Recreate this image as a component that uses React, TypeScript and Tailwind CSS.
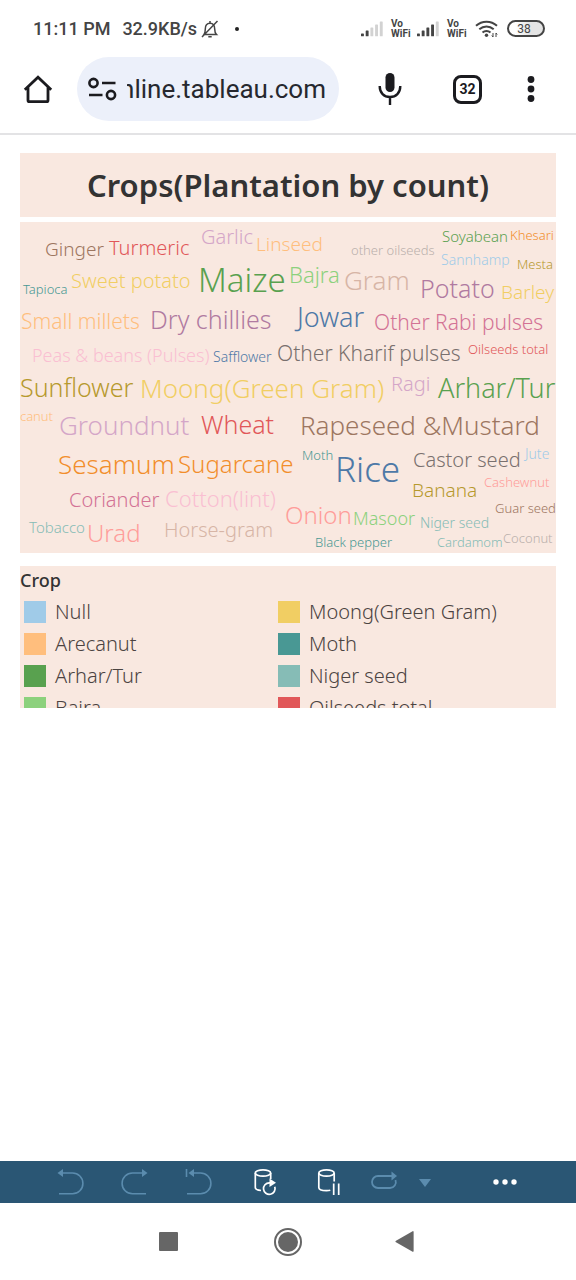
import React from "react";

type Word = [text: string, x: number, y: number, size: number, color: string];

// Word positions are the left end of the baseline on the 536 x 331 cloud canvas.
const words: Word[] = [
  ["Ginger", 25, 34, 19, "#9d7660"],
  ["Turmeric", 89, 33, 20, "#e15759"],
  ["Garlic", 181, 22, 20, "#d4a6c8"],
  ["Linseed", 236, 29, 19, "#ffbe7d"],
  ["other oilseeds", 331, 33, 13, "#bab0ac"],
  ["Soyabean", 422, 20, 15, "#59a14f"],
  ["Khesari", 490, 18, 13, "#f28e2b"],
  ["Sannhamp", 421, 43, 14, "#a0cbe8"],
  ["Mesta", 497, 47, 13, "#b6992d"],
  ["Tapioca", 3, 72, 13, "#499894"],
  ["Sweet potato", 51, 66, 20, "#f1ce63"],
  ["Maize", 178, 70, 33, "#59a14f"],
  ["Bajra", 269, 61, 22, "#8cd17d"],
  ["Gram", 324, 68, 26, "#d7b5a6"],
  ["Potato", 400, 76, 25, "#b07aa1"],
  ["Barley", 481, 77, 19, "#f1ce63"],
  ["Small millets", 1, 107, 21, "#ffbe7d"],
  ["Dry chillies", 130, 107, 25, "#b07aa1"],
  ["Jowar", 277, 105, 27, "#4e79a7"],
  ["Other Rabi pulses", 354, 108, 21, "#d37295"],
  ["Peas & beans (Pulses)", 12, 140, 18, "#fabfd2"],
  ["Safflower", 193, 140, 14, "#4e79a7"],
  ["Other Kharif pulses", 257, 139, 21, "#79706e"],
  ["Oilseeds total", 448, 132, 13, "#e15759"],
  ["Sunflower", 0, 175, 25, "#b6992d"],
  ["Moong(Green Gram)", 120, 176, 26, "#f1ce63"],
  ["Ragi", 371, 169, 20, "#d4a6c8"],
  ["Arhar/Tur", 418, 176, 27, "#59a14f"],
  ["Arecanut", -20, 199, 13, "#ffbe7d"],
  ["Groundnut", 39, 213, 26, "#d4a6c8"],
  ["Wheat", 181, 212, 25, "#e15759"],
  ["Rapeseed &Mustard", 280, 213, 26, "#9d7660"],
  ["Sesamum", 38, 252, 26, "#f28e2b"],
  ["Sugarcane", 158, 251, 24, "#f28e2b"],
  ["Moth", 282, 238, 13, "#499894"],
  ["Rice", 315, 260, 35, "#4e79a7"],
  ["Castor seed", 393, 245, 20, "#79706e"],
  ["Jute", 505, 237, 14, "#a0cbe8"],
  ["Banana", 392, 275, 19, "#b6992d"],
  ["Cashewnut", 464, 265, 13, "#ff9d9a"],
  ["Coriander", 49, 285, 20, "#d37295"],
  ["Cotton(lint)", 145, 285, 22, "#fabfd2"],
  ["Onion", 265, 302, 24, "#ff9d9a"],
  ["Masoor", 333, 303, 18, "#8cd17d"],
  ["Guar seed", 475, 291, 13, "#9d7660"],
  ["Niger seed", 400, 306, 14, "#86bcb6"],
  ["Tobacco", 9, 311, 15, "#86bcb6"],
  ["Urad", 67, 320, 24, "#ff9d9a"],
  ["Horse-gram", 144, 315, 20, "#d7b5a6"],
  ["Black pepper", 295, 325, 13, "#499894"],
  ["Cardamom", 417, 325, 13, "#86bcb6"],
  ["Coconut", 483, 321, 13, "#bab0ac"],
];

const legend: { name: string; swatch: string }[] = [
  { name: "Null", swatch: "bg-[#a0cbe8]" },
  { name: "Moong(Green Gram)", swatch: "bg-[#f1ce63]" },
  { name: "Arecanut", swatch: "bg-[#ffbe7d]" },
  { name: "Moth", swatch: "bg-[#499894]" },
  { name: "Arhar/Tur", swatch: "bg-[#59a14f]" },
  { name: "Niger seed", swatch: "bg-[#86bcb6]" },
  { name: "Bajra", swatch: "bg-[#8cd17d]" },
  { name: "Oilseeds total", swatch: "bg-[#e15759]" },
];

function Signal({ level }: { level: number }) {
  return (
    <svg className="h-4 w-[22px]" viewBox="0 0 22 16" aria-hidden="true">
      {[0, 1, 2, 3, 4].map((i) => (
        <rect
          key={i}
          x={i * 4.7}
          y={12.5 - i * 3}
          width="2.9"
          height={2.8 + i * 3}
          rx="0.6"
          fill={i < level ? "#444" : "#d2d2d2"}
        />
      ))}
    </svg>
  );
}

function VoWifi() {
  return (
    <div className="w-5 text-[10px] leading-[10px] font-bold text-[#444]">
      <div>Vo</div>
      <div>WiFi</div>
    </div>
  );
}

function StatusBar() {
  return (
    <div className="flex h-[57px] items-center justify-between pr-[31px] pl-[33px] text-[18px] font-medium text-[#444]">
      <div className="flex items-center">
        <span>11:11 PM</span>
        <span className="ml-3">32.9KB/s</span>
        <svg className="ml-1 size-[18px]" viewBox="0 0 18 18" fill="none" stroke="#444" strokeWidth="1.5" aria-hidden="true">
          <path d="M3 14.5h12.500c-1.600-1.500-1.800-3-1.800-5.500 0-3.700-1.700-5.800-4.700-5.800S4.300 5.300 4.300 9c0 2.500-.2 4-1.300 5.500zM7.300 16.800h3.400M9 1v2M1 17 16.500 1" />
        </svg>
        <span className="ml-4 size-1 rounded-full bg-[#222]" />
      </div>
      <div className="flex items-center">
        <Signal level={2} />
        <div className="ml-2">
          <VoWifi />
        </div>
        <div className="ml-[6px]">
          <Signal level={4} />
        </div>
        <div className="ml-2">
          <VoWifi />
        </div>
        <svg className="ml-2 h-[18px] w-[23px]" viewBox="0 0 23 18" fill="none" stroke="#444" strokeWidth="2" aria-hidden="true">
          <path d="M1 5.800c6-5.400 15-5.400 21 0M4.300 9.300c4.200-3.700 10.200-3.700 14.400 0M7.500 12.600c2.300-2 5.700-2 8 0" />
          <circle cx="11.500" cy="15.300" r="1.700" fill="#444" stroke="none" />
          <path d="M18 13v4m-1.200-1.500L18 17M21 17v-4m1.200 1.500L21 13" strokeWidth="1" />
        </svg>
        <div className="ml-[9px] flex h-[17px] w-[38px] items-center justify-center rounded-full border-2 border-[#444] bg-linear-to-r from-white from-20% to-[#e4e4e4] to-60% pr-1 text-[12px] font-normal">
          38
        </div>
      </div>
    </div>
  );
}

function BrowserBar() {
  return (
    <header className="flex h-[78px] items-start border-b-2 border-[#e3e3e5] text-[#1b1b1f]">
      <button type="button" aria-label="Home" className="mt-[17px] ml-[23px] size-[30px]">
        <svg viewBox="0 0 30 30" fill="none" stroke="currentColor" strokeWidth="2.800">
          <path d="M1.800 15.800 15 3.300l13.200 12.500M5 13v13.200q0 1.500 1.500 1.500h17q1.500 0 1.500-1.500V13" />
        </svg>
      </button>
      <div className="ml-6 flex h-16 min-w-0 flex-1 items-center rounded-full bg-[#ecf0fa] pr-[13px] pl-[11px]">
        <button type="button" aria-label="Site information" className="h-6 w-[29px] shrink-0">
          <svg viewBox="0 0 29 24" fill="none" stroke="currentColor" strokeWidth="2.600">
            <circle cx="5.500" cy="6" r="4.100" />
            <circle cx="23" cy="18" r="4.100" />
            <path d="M14 6h13.500M1 18h13.500" />
          </svg>
        </button>
        <div className="ml-[10px] flex min-w-0 flex-1 justify-end overflow-hidden">
          <input
            aria-label="Address"
            className="w-60 shrink-0 bg-transparent text-right text-[26px] leading-8 text-[#26282f] outline-none"
            defaultValue="online.tableau.com"
          />
        </div>
      </div>
      <button type="button" aria-label="Voice search" className="mt-4 ml-[39px] h-8 w-6">
        <svg viewBox="0 0 24 32" fill="none" stroke="currentColor" strokeWidth="2.400">
          <rect x="7.500" y="0" width="9" height="19" rx="4.500" fill="currentColor" stroke="none" />
          <path d="M1.700 13c0 7 4.300 11 10.300 11s10.300-4 10.300-11M12 24v8" />
        </svg>
      </button>
      <button
        type="button"
        aria-label="Open tabs"
        className="mt-[18px] ml-[51px] flex size-[29px] items-center justify-center rounded-lg border-3 border-current text-[14px] font-bold"
      >
        32
      </button>
      <button type="button" aria-label="Menu" className="mt-[18px] mr-[41px] ml-[45px] h-7 w-2">
        <svg viewBox="0 0 8 28" fill="currentColor">
          <circle cx="4" cy="4.500" r="3.400" />
          <circle cx="4" cy="14" r="3.400" />
          <circle cx="4" cy="23.500" r="3.400" />
        </svg>
      </button>
    </header>
  );
}

function Dashboard() {
  return (
    <main className="flex-1 px-5 pt-[18px] font-['Noto_Sans',sans-serif]">
      <h1 className="flex h-16 items-center justify-center bg-[#f9e8e0] text-[31px] font-semibold whitespace-nowrap text-[#333]">
        Crops(Plantation by count)
      </h1>
      <svg
        className="mt-[5px] block w-full bg-[#f9e8e0] font-light"
        viewBox="0 0 536 331"
        role="img"
        aria-label="Crops by plantation count"
      >
        {words.map(([text, x, y, size, color]) => (
          <text key={text} x={x} y={y} fontSize={size} fill={color}>
            {text}
          </text>
        ))}
      </svg>
      <section className="mt-[13px] h-[142px] overflow-hidden bg-[#f9e8e0] text-[#4b4341]">
        <h2 className="text-[18px] leading-7 font-medium text-[#333]">Crop</h2>
        <ul className="grid grid-cols-[254px_1fr] pt-[2px] pl-1 text-[20px] leading-8 font-light">
          {legend.map(({ name, swatch }) => (
            <li key={name} className="flex items-center gap-[9px]">
              <span className={`size-[22px] ${swatch}`} />
              {name}
            </li>
          ))}
        </ul>
      </section>
    </main>
  );
}

function TableauToolbar() {
  return (
    <div className="flex h-[42px] items-center bg-[#2a5674] text-[#5b8cae]">
      <button type="button" aria-label="Undo" className="ml-[57px] h-7 w-7">
        <svg viewBox="0 0 28 28" fill="none" stroke="currentColor" strokeWidth="1.600">
          <path d="M4 5h11.500a10.400 10.400 0 0 1 0 20.800H2" />
          <path d="M6 1v8L.5 5z" fill="currentColor" stroke="none" />
        </svg>
      </button>
      <button type="button" aria-label="Redo" className="ml-[35px] h-7 w-7">
        <svg viewBox="0 0 28 28" fill="none" stroke="currentColor" strokeWidth="1.600">
          <path d="M24 5H12.500a10.400 10.400 0 0 0 0 20.800H26" />
          <path d="M22 1v8l5.500-4z" fill="currentColor" stroke="none" />
        </svg>
      </button>
      <button type="button" aria-label="Revert" className="ml-[36px] h-7 w-7">
        <svg viewBox="0 0 28 28" fill="none" stroke="currentColor" strokeWidth="1.600">
          <path d="M7 5h9.500a10.400 10.400 0 0 1 0 20.800H3M2.500 1v8" />
          <path d="M10 1v8L4.500 5z" fill="currentColor" stroke="none" />
        </svg>
      </button>
      <button type="button" aria-label="Refresh data" className="ml-[41px] h-7 w-6 text-white">
        <svg viewBox="0 0 24 28" fill="none" stroke="currentColor" strokeWidth="1.700">
          <ellipse cx="10" cy="5" rx="7.700" ry="3.200" />
          <path d="M2.300 5v14.500c0 1.600 2.500 2.700 5.700 3M17.700 5v6" />
          <path d="M18.500 14.800h-2.200a5.800 5.800 0 1 0 5.500 4" />
          <path d="M16.500 10.500v8.500l6.500-4.200z" fill="currentColor" stroke="none" />
        </svg>
      </button>
      <button type="button" aria-label="Pause updates" className="ml-10 h-7 w-6 text-white">
        <svg viewBox="0 0 24 28" fill="none" stroke="currentColor" strokeWidth="1.700">
          <ellipse cx="9.500" cy="5" rx="7.700" ry="3.200" />
          <path d="M1.800 5v14.500c0 2 3.500 3.200 7.700 3.200 1.500 0 2.700-.1 3.800-.4M17.200 5v8.500M16.700 15.500v11.500M21.700 15.500v11.500" />
        </svg>
      </button>
      <button type="button" aria-label="Replay" className="ml-[29px] h-7 w-7">
        <svg viewBox="0 0 28 28" fill="none" stroke="currentColor" strokeWidth="1.800">
          <path d="M22 8H8a6 6 0 0 0 0 12h12a6 6 0 0 0 5.500-8" />
          <path d="M21.500 3.500v9l5.500-4.500z" fill="currentColor" stroke="none" />
        </svg>
      </button>
      <button type="button" aria-label="Replay options" className="ml-5 h-3 w-3.5">
        <svg viewBox="0 0 14 12" fill="currentColor">
          <path d="M1 3h12L7 11z" />
        </svg>
      </button>
      <button type="button" aria-label="More" className="ml-[61px] h-3 w-6 text-white">
        <svg viewBox="0 0 24 12" fill="currentColor">
          <circle cx="3" cy="6" r="2.700" />
          <circle cx="12" cy="6" r="2.700" />
          <circle cx="21" cy="6" r="2.700" />
        </svg>
      </button>
    </div>
  );
}

function SystemNav() {
  return (
    <nav className="flex h-[77px] items-center text-[#666]">
      <button type="button" aria-label="Recent apps" className="ml-[159px] size-[19px] rounded-[1px] bg-current" />
      <button type="button" aria-label="Home screen" className="ml-24 size-[28px]">
        <svg viewBox="0 0 28 28" fill="currentColor">
          <circle cx="14" cy="14" r="13" fill="none" stroke="currentColor" strokeWidth="2" />
          <circle cx="14" cy="14" r="10" />
        </svg>
      </button>
      <button type="button" aria-label="Back" className="ml-[93px] h-[21px] w-[19px]">
        <svg viewBox="0 0 19 21" fill="currentColor">
          <path d="M1 9.700 17.600.2q1-.4 1 .7v19.200q0 1.100-1 .6L1 11.300q-1.200-.8 0-1.600z" />
        </svg>
      </button>
    </nav>
  );
}

export default function App() {
  return (
    <div className="flex min-h-screen flex-col overflow-x-hidden bg-white font-[Roboto,sans-serif]">
      <StatusBar />
      <BrowserBar />
      <Dashboard />
      <TableauToolbar />
      <SystemNav />
    </div>
  );
}
